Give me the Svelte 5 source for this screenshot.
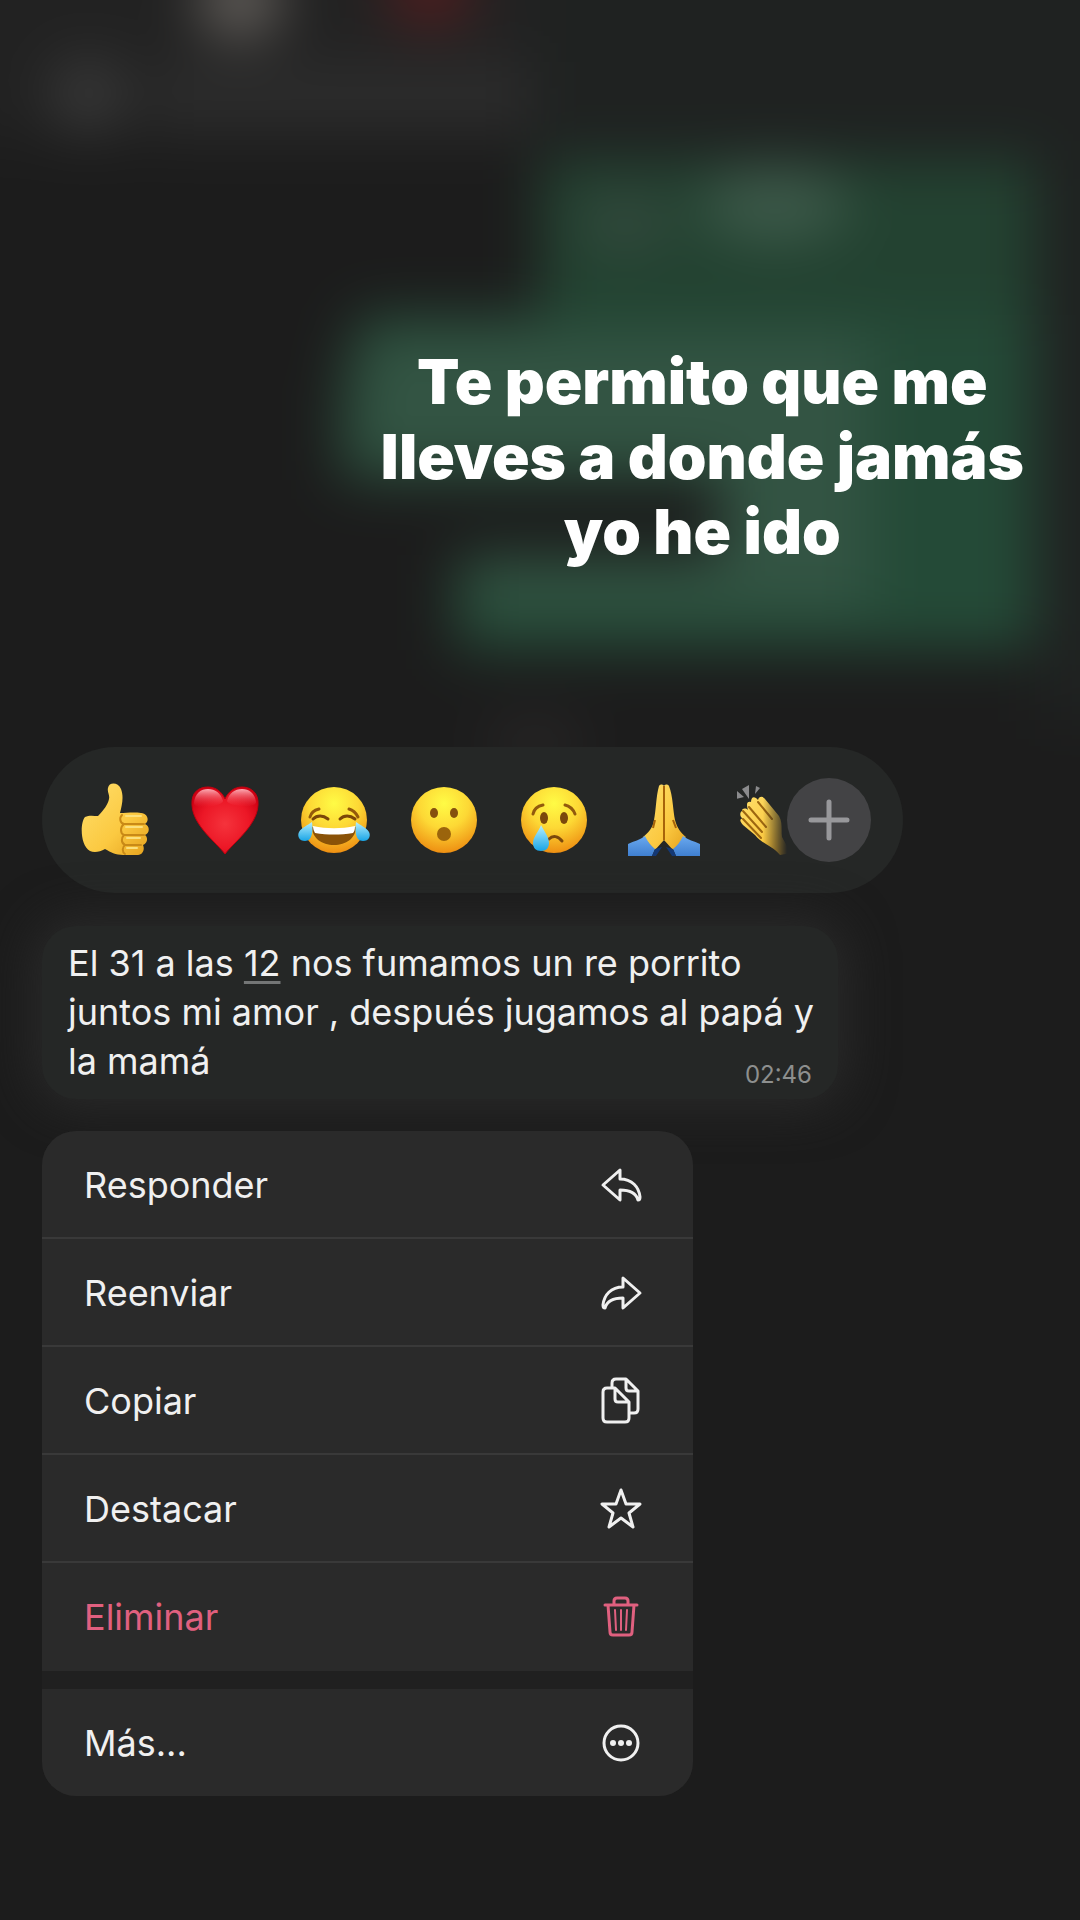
<script>
  const reactions = [
    { id: 'thumb', label: 'Me gusta' },
    { id: 'heart', label: 'Me encanta' },
    { id: 'joy', label: 'Me divierte' },
    { id: 'wow', label: 'Me asombra' },
    { id: 'cry', label: 'Me entristece' },
    { id: 'pray', label: 'Gracias' },
    { id: 'clap', label: 'Aplausos' }
  ];

  const actions = [
    { id: 'reply', label: 'Responder' },
    { id: 'forward', label: 'Reenviar' },
    { id: 'copy', label: 'Copiar' },
    { id: 'star', label: 'Destacar' },
    { id: 'trash', label: 'Eliminar', danger: true }
  ];
</script>

{#snippet emoji(id)}
  <svg class="emoji" viewBox="0 0 74 74" aria-hidden="true">
    {#if id === 'thumb'}
      <path fill="url(#skin)" d="M31 5c1-6 10-6 13 1 3 8 1 16-1 24 6 0 14-1 21 0 8 1 8 9 4 11 5 2 5 9 0 11 3 2 3 8-2 10 2 4 0 10-5 10H46c-7 0-13-3-18-6-5 3-11 4-15 2C3 62 3 40 8 34c4-2 9-1 13-1 6-6 10-12 11-17 1-4-2-7-1-11Z" />
      <path fill="none" stroke="#c98a17" stroke-width="2" stroke-linecap="round" d="M67 41H47c-4-1-5-6-2-9M67 52H47c-4-2-4-8 0-11M64 62H48c-4-2-4-7-1-10M48 62c-3 2-3 7 0 9" />
      <path fill="none" stroke="#fbe07c" stroke-width="2" stroke-linecap="round" d="M49 33h15M49 44h16M50 55h13M50 65h10" />
    {:else if id === 'heart'}
      <path fill="url(#heart)" stroke="#c2000f" stroke-width="1" d="M38 71C30 60 6 43 5 22 4 9 12 4 21 4c8 0 14 5 17 12C41 9 47 4 55 4c9 0 17 6 16 18C70 43 46 60 38 71Z" />
      <path fill="url(#shine)" d="M7 20C8 10 14 6 21 6c7 0 13 4 15 12 0 5-29 10-29 2ZM40 18C42 10 48 6 55 6s13 4 14 13c0 7-28 4-29-1Z" />
    {:else if id === 'joy'}
      <circle cx="37" cy="37" r="33" fill="url(#face)" />
      <path fill="none" stroke="#93590b" stroke-width="3" stroke-linecap="round" d="M13 34c1-4 5-7 9-8M61 34c-2-4-5-7-9-8" />
      <path fill="none" stroke="#7b4708" stroke-width="3" stroke-linecap="round" d="M16 36c4-4 10-4 15 0M43 36c4-4 10-4 15 0" />
      <path fill="#8a5207" d="M15 44c14 3 30 3 44 0 0 11-10 18-22 18S15 55 15 44Z" />
      <path fill="#fff" d="M16 43c14 3 28 3 42 0 0 4-1 6-2 7-13 2-25 2-38 0-1-2-2-4-2-7Z" />
      <path fill="url(#tear)" d="M15 39c1 8 1 19-7 19-6 0-8-5-6-9 3-5 8-6 13-10ZM59 39c-1 8-1 19 7 19 6 0 8-5 6-9-3-5-8-6-13-10Z" />
    {:else if id === 'wow'}
      <circle cx="37" cy="37" r="33" fill="url(#face)" />
      <ellipse cx="27" cy="30" rx="4" ry="5" fill="#85500e" />
      <ellipse cx="47" cy="30" rx="4" ry="5" fill="#85500e" />
      <circle cx="37" cy="51" r="7" fill="#9b640c" />
    {:else if id === 'cry'}
      <circle cx="37" cy="37" r="33" fill="url(#face)" />
      <path fill="none" stroke="#925a0d" stroke-width="3" stroke-linecap="round" d="M16 31c1-5 5-8 10-9M58 31c-2-5-5-8-10-9" />
      <ellipse cx="27" cy="35" rx="4" ry="6" fill="#7b480c" />
      <ellipse cx="47" cy="35" rx="4" ry="6" fill="#7b480c" />
      <path fill="none" stroke="#7b480c" stroke-width="3" stroke-linecap="round" d="M32 56c4-4 9-3 13 2" />
      <path fill="url(#tear)" d="M24 42c3 6 8 12 8 18 0 5-3 8-8 8s-8-3-8-8c0-6 6-12 8-18Z" />
    {:else if id === 'pray'}
      <path fill="url(#skin)" d="M37 57 28 67 16 54c5-4 10-9 11-17 2-9 2-24 5-34 1-2 4-2 5 0 1-2 4-2 5 0 4 10 4 25 6 34 2 8 6 13 11 17L46 67Z" />
      <path fill="none" stroke="#a86309" stroke-width="2" d="M37 3v54M28 37l-2 8M46 37l3 8" />
      <path fill="url(#sleeve)" d="M1 61c6-3 12-4 17-8 3 6 6 10 10 13l-3 7H1Z" />
      <path fill="url(#sleeve)" d="M73 61c-6-3-12-4-17-8-3 6-6 10-10 13l3 7h24Z" />
      <path fill="#143874" d="m28 66-3 7h4l6-9ZM46 66l3 7h-4l-6-9Z" />
    {:else if id === 'clap'}
      <path fill="#8b8b8d" d="m5 6 7 10V2ZM0 8l7 6-8 2ZM19 3l4 2-5 6Z" />
      <path fill="url(#skin)" d="M5 28c0-3 4-3 6-1-2-6-1-9 3-8 0-6 4-6 7-2 1-4 5-4 7-1l14 17c4 7 2 14 3 21l9 16-11 2c-7-9-17-10-25-20L6 42c-4-4-3-7 0-6-4-3-3-7-1-8Z" />
      <path fill="none" stroke="#9c6610" stroke-width="2" stroke-linecap="round" d="m6 36 18 19M6 28l19 21M12 24l17 20M21 19l14 17" />
    {/if}
  </svg>
{/snippet}

{#snippet icon(id)}
  <svg class="icon" viewBox="0 0 44 48" aria-hidden="true">
    {#if id === 'reply'}
      <path d="M21 9 4 24l17 15V29c9 0 16 3 18 10 2 0 2-1 2-3-1-10-8-18-20-18Z" />
    {:else if id === 'forward'}
      <path d="m24 9 17 15-17 15V29c-9 0-16 3-18 10-2 0-2-1-2-3 1-10 8-18 20-18Z" />
    {:else if id === 'copy'}
      <path d="M13 10V6q0-4 4-4h10l12 12v18q0 4-4 4h-4M27 2v9q0 3 3 3h9" />
      <path d="M8 11h8l14 14v16q0 4-4 4H8q-4 0-4-4V15q0-4 4-4ZM16 11v11q0 3 3 3h11" />
    {:else if id === 'star'}
      <path d="m22 5 5 14h14L30 28l4 14-12-9-12 9 4-14L3 19h14Z" />
    {:else if id === 'trash'}
      <path d="M6 12h32M15 12V8q0-3 3-3h8q3 0 3 3v4M9 12l2 27q0 3 3 3h16q3 0 3-3l2-27" />
      <path class="thin" d="m16 17 1 20M22 17v20M28 17l-1 20" />
    {:else}
      <circle cx="22" cy="24" r="17" />
      <g class="dots">
        <circle cx="14" cy="24" r="3" />
        <circle cx="22" cy="24" r="3" />
        <circle cx="30" cy="24" r="3" />
      </g>
    {/if}
  </svg>
{/snippet}

<svg class="backdrop" viewBox="0 0 1080 1920" preserveAspectRatio="none" aria-hidden="true">
  <defs>
    <filter id="soft" x="-200" y="-200" width="1500" height="2300" filterUnits="userSpaceOnUse" color-interpolation-filters="sRGB">
      <feGaussianBlur stdDeviation="28" />
    </filter>
    <radialGradient id="face" cx=".5" cy=".25" r=".75">
      <stop offset="0" stop-color="#fffb45" />
      <stop offset=".5" stop-color="#fdd835" />
      <stop offset="1" stop-color="#ee8f12" />
    </radialGradient>
    <linearGradient id="skin" x1="0" y1="0" x2="1" y2="1">
      <stop offset="0" stop-color="#ffdf6b" />
      <stop offset=".6" stop-color="#fbc941" />
      <stop offset="1" stop-color="#e5a11d" />
    </linearGradient>
    <radialGradient id="heart" cx=".5" cy=".55" r=".6">
      <stop offset="0" stop-color="#f5333c" />
      <stop offset=".6" stop-color="#ec1726" />
      <stop offset="1" stop-color="#cf0013" />
    </radialGradient>
    <linearGradient id="shine" x1="0" y1="0" x2="0" y2="1">
      <stop offset="0" stop-color="#ffb5bd" stop-opacity=".95" />
      <stop offset="1" stop-color="#f13a47" stop-opacity="0" />
    </linearGradient>
    <linearGradient id="tear" x1="0" y1="0" x2="0" y2="1">
      <stop offset="0" stop-color="#b5efff" />
      <stop offset="1" stop-color="#19a5e6" />
    </linearGradient>
    <linearGradient id="sleeve" x1="0" y1="0" x2="0" y2="1">
      <stop offset="0" stop-color="#6aa9ef" />
      <stop offset="1" stop-color="#3f7fd0" />
    </linearGradient>
  </defs>
  <g filter="url(#soft)">
    <rect x="-300" y="-300" width="1700" height="2500" fill="#1c1c1c" />
    <rect x="540" y="-80" width="660" height="250" fill="#1f2221" />
    <rect x="-80" y="-80" width="620" height="220" fill="#222222" />
    <circle cx="88" cy="95" r="36" fill="#3a3a3a" />
    <rect x="150" y="62" width="380" height="68" fill="#2c2c2c" />
    <ellipse cx="240" cy="0" rx="42" ry="38" fill="#64605c" />
    <ellipse cx="430" cy="-8" rx="42" ry="32" fill="#551c1e" />
    <rect x="1035" y="100" width="120" height="620" fill="#1f2221" />
    <rect x="540" y="160" width="495" height="190" fill="#234231" />
    <path fill="#244a37" d="M360 315h675v335H455v-95h265v-75H340v-90Z" />
    <ellipse cx="625" cy="222" rx="45" ry="24" fill="#364a3f" />
    <ellipse cx="775" cy="205" rx="75" ry="36" fill="#3d5a4a" />
    <path fill="#335443" d="M365 335h505v275H470v-45h250V465H350Z" />
    <ellipse cx="535" cy="742" rx="50" ry="20" fill="#2a2828" />
  </g>
</svg>

<main>
  <h1>Te permito que me<br />lleves a donde jamás<br />yo he ido</h1>

  <div class="reactions">
    <div class="strip">
      {#each reactions as r}
        <button class="reaction" aria-label={r.label}>{@render emoji(r.id)}</button>
      {/each}
    </div>
    <button class="more" aria-label="Más reacciones">
      <svg viewBox="0 0 84 84" aria-hidden="true"><path d="M42 24v36M24 42h36" /></svg>
    </button>
  </div>

  <article class="bubble">
    <p>
      El 31 a las <a href="#hora">12</a> nos fumamos un re porrito juntos mi amor , después jugamos al papá y la mamá
      <time datetime="02:46">02:46</time>
    </p>
  </article>

  <nav class="menu" aria-label="Acciones del mensaje">
    {#each actions as a}
      <button class="action" class:danger={a.danger}>
        <span>{a.label}</span>
        {@render icon(a.id)}
      </button>
    {/each}
    <button class="action last">
      <span>Más...</span>
      {@render icon('more')}
    </button>
  </nav>
</main>

<style>
  :global(body) {
    background: #1c1c1c;
  }

  .backdrop {
    position: absolute;
    inset: 0;
    width: 100%;
    height: 100%;
  }

  main {
    position: relative;
    box-sizing: border-box;
    min-height: 100vh;
    padding: 344px 42px 64px;
    display: flex;
    flex-direction: column;
    align-items: flex-start;
    font-family: Inter, 'Liberation Sans', sans-serif;
    font-size: 36px;
    color: #f0f0f0;
  }

  h1 {
    align-self: flex-end;
    margin: 0 14px 178px 0;
    font-size: 62px;
    line-height: 75px;
    font-weight: 900;
    text-align: center;
    color: #fff;
  }

  button {
    border: 0;
    padding: 0;
    margin: 0;
    background: none;
    font: inherit;
    color: inherit;
  }

  svg {
    display: block;
  }

  .reactions {
    box-sizing: border-box;
    width: 100%;
    max-width: 861px;
    height: 146px;
    padding: 0 32px 0 35px;
    display: flex;
    align-items: center;
    border-radius: 73px;
    background: #252726;
  }

  .strip {
    flex: 1;
    min-width: 0;
    display: flex;
    gap: 36px;
    overflow: hidden;
    mask-image: linear-gradient(to left, transparent 0, #000 24px);
  }

  .reaction {
    flex: none;
  }

  .emoji {
    width: 74px;
    height: 74px;
  }

  .more {
    flex: none;
    width: 84px;
    height: 84px;
    border-radius: 50%;
    background: #434345;
  }

  .more path {
    stroke: #98989b;
    stroke-width: 5;
    stroke-linecap: round;
  }

  .bubble {
    box-sizing: border-box;
    width: 100%;
    max-width: 796px;
    margin-top: 33px;
    padding: 13px 16px 9px 26px;
    border-radius: 34px;
    background: #252726;
    box-shadow: 0 0 48px 8px #2a2a2a;
  }

  .bubble p {
    margin: 0;
    line-height: 49px;
  }

  .bubble a {
    color: inherit;
    text-decoration: underline #747676 3px;
    text-underline-offset: 5px;
  }

  time {
    float: right;
    margin: 23px 10px 0 0;
    font-size: 24px;
    line-height: 30px;
    color: #8d8f8e;
  }

  .menu {
    width: 100%;
    max-width: 651px;
    margin-top: 32px;
    border-radius: 34px;
    overflow: hidden;
    background: #202020;
  }

  .action {
    box-sizing: border-box;
    width: 100%;
    height: 108px;
    padding: 0 50px 0 42px;
    display: flex;
    align-items: center;
    justify-content: space-between;
    background: #2a2a2a;
    box-shadow: inset 0 -2px #393939;
  }

  .danger {
    color: #e0607f;
    box-shadow: none;
  }

  .last {
    height: 107px;
    margin-top: 18px;
    box-shadow: none;
  }

  .icon {
    width: 44px;
    height: 48px;
    fill: none;
    stroke: currentColor;
    stroke-width: 3;
    stroke-linecap: round;
    stroke-linejoin: round;
  }

  .thin {
    stroke-width: 2;
  }

  .dots {
    fill: currentColor;
    stroke: none;
  }
</style>
